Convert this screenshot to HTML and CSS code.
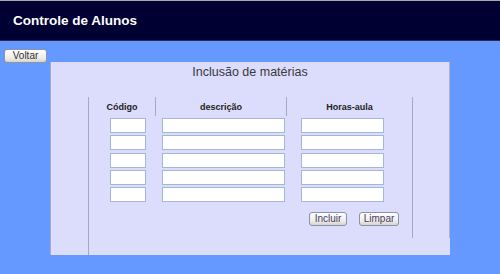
FILE: index.html
```html
<!DOCTYPE html>
<html lang="pt">

<head>
    <meta charset="UTF-8">
    <title>Controle de Alunos</title>
    <link rel="stylesheet" href="styles.css">
</head>

<body>
    <header class="topbar">
        <h1>Controle de Alunos</h1>
    </header>

    <div class="toolbar">
        <button type="button" class="btn btn-back">Voltar</button>
    </div>

    <div class="panel">
        <div class="panel-body">
            <h2 class="panel-title">Inclusão de matérias</h2>

            <form class="materias">
                <div class="materias-head">
                    <div>Código</div>
                    <div>descrição</div>
                    <div>Horas-aula</div>
                </div>

                <div class="materias-rows">
                    <input type="text" class="in-cod"><input type="text" class="in-desc"><input type="text" class="in-horas">
                    <input type="text" class="in-cod"><input type="text" class="in-desc"><input type="text" class="in-horas">
                    <input type="text" class="in-cod"><input type="text" class="in-desc"><input type="text" class="in-horas">
                    <input type="text" class="in-cod"><input type="text" class="in-desc"><input type="text" class="in-horas">
                    <input type="text" class="in-cod"><input type="text" class="in-desc"><input type="text" class="in-horas">
                </div>

                <div class="materias-actions">
                    <button type="submit" class="btn btn-incluir">Incluir</button>
                    <button type="reset" class="btn btn-limpar">Limpar</button>
                </div>
            </form>
        </div>
        <div class="panel-foot"></div>
    </div>
</body>

</html>
```

FILE: styles.css
```css
body {
    font-family: 'Liberation Sans', Arial, sans-serif;
    color: #333;
    margin: 0;
    padding: 0;
    background-color: #6699ff;
}

.topbar {
    height: 39px;
    background-color: #000033;
    border-top: 1px solid #a8a8a8;
    border-bottom: 1px solid #2a2a5a;
}

.topbar h1 {
    margin: 0;
    padding-left: 13px;
    font-size: 13.5px;
    line-height: 39px;
    color: #fff;
}

.toolbar {
    padding: 4px 4px 0;
    height: 14px;
}

.btn {
    font-family: 'Liberation Sans', Arial, sans-serif;
    font-size: 10px;
    color: #333;
    height: 14px;
    padding: 0;
    line-height: 12px;
    border: 1px solid #8a93a8;
    border-radius: 3px;
    background: linear-gradient(#ffffff, #ecebe6 70%, #d6d3ca);
    cursor: pointer;
}

.btn-back {
    width: 43px;
}

.panel {
    margin: 3px 0 0 50px;
    width: 400px;
    background-color: #dcdcfc;
    border-left: 1px solid #a3a9c9;
    box-sizing: border-box;
}

.panel-body {
    border-right: 1px solid #b0b0c4;
    padding-top: 2px;
}

.panel-title {
    margin: 0;
    font-size: 12.5px;
    font-weight: normal;
    line-height: 16px;
    text-align: center;
    color: #3a3a3a;
}

.materias {
    margin: 17px 0 0 37px;
    width: 325px;
    border-left: 1px solid #a8a8bc;
    border-right: 1px solid #a8a8bc;
    box-sizing: border-box;
}

.materias-head {
    display: grid;
    grid-template-columns: 66px 131px 1fr;
    height: 18px;
    font-size: 9px;
    font-weight: bold;
    color: #222;
}

.materias-head div {
    text-align: center;
    line-height: 18px;
    padding-top: 1px;
}

.materias-head div + div {
    border-left: 1px solid #a8a8bc;
}

.materias-rows {
    display: grid;
    grid-template-columns: 36px 123px 83px;
    column-gap: 16px;
    row-gap: 2.3px;
    padding: 3px 0 0 21px;
}

.materias-rows input {
    height: 15px;
    margin: 0;
    padding: 0;
    box-sizing: border-box;
    border: 1px solid #a4b8d6;
    background-color: #fff;
}

.materias-actions {
    display: flex;
    justify-content: flex-end;
    gap: 12px;
    padding: 10px 13px 12px 0;
}

.btn-incluir {
    width: 38px;
    color: #4a3a6a;
}

.btn-limpar {
    width: 40px;
    color: #4a3a6a;
}

.panel-foot {
    height: 17px;
    margin-left: 37px;
    border-left: 1px solid #a8a8bc;
}
```
